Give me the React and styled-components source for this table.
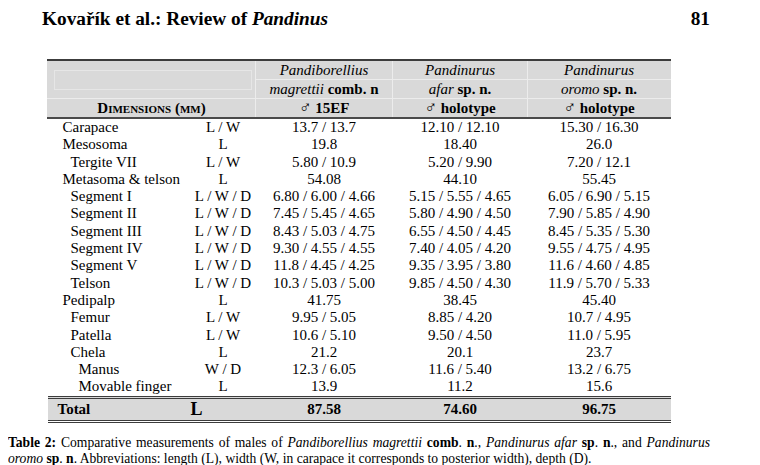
import React from "react";
import styled, { createGlobalStyle } from "styled-components";

const serif = `"Liberation Serif", "Times New Roman", serif`;

const GlobalStyle = createGlobalStyle`
  body {
    margin: 8px;
    background: #ffffff;
    color: #000000;
    font-family: ${serif};
  }
`;

const Page = styled.div`
  width: 744px;
  font-family: ${serif};
`;

const RunningHead = styled.header`
  display: flex;
  justify-content: space-between;
  align-items: baseline;
  padding: 0 42px 0 34px;
  font-size: 19.3px;
  line-height: 22px;
  font-weight: bold;
`;

const Table = styled.table`
  margin: 29px 0 0 39px;
  width: 623px;
  border-collapse: collapse;
  font-family: ${serif};
  font-size: 15px;
  table-layout: fixed;
`;

const HeadCell = styled.th`
  background: #d9d9d9;
  border: 1px solid #ececec;
  font-weight: normal;
  text-align: center;
  vertical-align: bottom;
  height: 18px;
  line-height: 18px;
  padding: 0;
  ${(p) => p.$top && "border-top: 2px solid #3c3c3c;"}
  ${(p) => p.$bottom && "border-bottom: 2px solid #4a4a4a;"}
  ${(p) => p.$first && "border-left-color: #d9d9d9;"}
  ${(p) => p.$last && "border-right-color: #d9d9d9;"}
`;

const BlankBox = styled.div`
  margin: 0 3px 8px 6px;
  height: 18px;
  border: 1px solid #e6e6e6;
`;

const DimLabel = styled.span`
  font-weight: bold;
  font-variant: small-caps;
`;

const Male = styled.span`
  font-size: 17px;
  font-weight: normal;
`;

const Cell = styled.td`
  height: 17.3px;
  line-height: 17.3px;
  white-space: nowrap;
  padding: 0 0 0 ${(p) => (p.$left ? 15 + p.$indent * 8 : 0)}px;
  text-align: ${(p) => (p.$left ? "left" : "center")};
`;

const TotalCell = styled.td`
  background: #d9d9d9;
  border-top: 3px double #3c3c3c;
  border-bottom: 3px double #3c3c3c;
  height: 19px;
  padding: 0;
  font-weight: bold;
  text-align: ${(p) => p.$align || "center"};
  padding-left: ${(p) => p.$pad || 0}px;
`;

const BigL = styled.span`
  font-size: 18px;
`;

const Caption = styled.p`
  margin: 12px 0 0 0;
  width: 702px;
  font-size: 13.6px;
  line-height: 16px;
  text-align: justify;
`;

const rows = [
  ["Carapace", 0, "L / W", "13.7 / 13.7", "12.10 / 12.10", "15.30 / 16.30"],
  ["Mesosoma", 0, "L", "19.8", "18.40", "26.0"],
  ["Tergite VII", 1, "L / W", "5.80 / 10.9", "5.20 / 9.90", "7.20 / 12.1"],
  ["Metasoma & telson", 0, "L", "54.08", "44.10", "55.45"],
  ["Segment I", 1, "L / W / D", "6.80 / 6.00 / 4.66", "5.15 / 5.55 / 4.65", "6.05 / 6.90 / 5.15"],
  ["Segment II", 1, "L / W / D", "7.45 / 5.45 / 4.65", "5.80 / 4.90 / 4.50", "7.90 / 5.85 / 4.90"],
  ["Segment III", 1, "L / W / D", "8.43 / 5.03 / 4.75", "6.55 / 4.50 / 4.45", "8.45 / 5.35 / 5.30"],
  ["Segment IV", 1, "L / W / D", "9.30 / 4.55 / 4.55", "7.40 / 4.05 / 4.20", "9.55 / 4.75 / 4.95"],
  ["Segment V", 1, "L / W / D", "11.8 / 4.45 / 4.25", "9.35 / 3.95 / 3.80", "11.6 / 4.60 / 4.85"],
  ["Telson", 1, "L / W / D", "10.3 / 5.03 / 5.00", "9.85 / 4.50 / 4.30", "11.9 / 5.70 / 5.33"],
  ["Pedipalp", 0, "L", "41.75", "38.45", "45.40"],
  ["Femur", 1, "L / W", "9.95 / 5.05", "8.85 / 4.20", "10.7 / 4.95"],
  ["Patella", 1, "L / W", "10.6 / 5.10", "9.50 / 4.50", "11.0 / 5.95"],
  ["Chela", 1, "L", "21.2", "20.1", "23.7"],
  ["Manus", 2, "W / D", "12.3 / 6.05", "11.6 / 5.40", "13.2 / 6.75"],
  ["Movable finger", 2, "L", "13.9", "11.2", "15.6"],
];

export default function App() {
  return (
    <Page>
      <GlobalStyle />
      <RunningHead>
        <span>
          Kovařík et al.: Review of <i>Pandinus</i>
        </span>
        <span>81</span>
      </RunningHead>

      <Table>
        <colgroup>
          <col style={{ width: 143 }} />
          <col style={{ width: 65 }} />
          <col style={{ width: 137 }} />
          <col style={{ width: 135 }} />
          <col style={{ width: 143 }} />
        </colgroup>
        <thead>
          <tr>
            <HeadCell colSpan={2} rowSpan={2} $top $first>
              <BlankBox />
            </HeadCell>
            <HeadCell $top>
              <i>Pandiborellius</i>
            </HeadCell>
            <HeadCell $top>
              <i>Pandinurus</i>
            </HeadCell>
            <HeadCell $top $last>
              <i>Pandinurus</i>
            </HeadCell>
          </tr>
          <tr>
            <HeadCell>
              <i>magrettii</i> <b>comb. n</b>
            </HeadCell>
            <HeadCell>
              <i>afar</i> <b>sp. n.</b>
            </HeadCell>
            <HeadCell $last>
              <i>oromo</i> <b>sp. n.</b>
            </HeadCell>
          </tr>
          <tr>
            <HeadCell colSpan={2} $bottom $first>
              <DimLabel>Dimensions (mm)</DimLabel>
            </HeadCell>
            <HeadCell $bottom>
              <Male>♂</Male> <b>15EF</b>
            </HeadCell>
            <HeadCell $bottom>
              <Male>♂</Male> <b>holotype</b>
            </HeadCell>
            <HeadCell $bottom $last>
              <Male>♂</Male> <b>holotype</b>
            </HeadCell>
          </tr>
        </thead>
        <tbody>
          {rows.map(([name, indent, dim, a, b, c]) => (
            <tr key={name}>
              <Cell $left $indent={indent}>
                {name}
              </Cell>
              <Cell>{dim}</Cell>
              <Cell>{a}</Cell>
              <Cell>{b}</Cell>
              <Cell>{c}</Cell>
            </tr>
          ))}
          <tr>
            <TotalCell $align="left" $pad={10}>
              Total
            </TotalCell>
            <TotalCell $align="left">
              <BigL>L</BigL>
            </TotalCell>
            <TotalCell>87.58</TotalCell>
            <TotalCell>74.60</TotalCell>
            <TotalCell>96.75</TotalCell>
          </tr>
        </tbody>
      </Table>

      <Caption>
        <b>Table 2:</b> Comparative measurements of males of <i>Pandiborellius magrettii</i>{" "}
        <b>comb</b>. <b>n</b>., <i>Pandinurus afar</i> <b>sp</b>. <b>n</b>., and <i>Pandinurus</i>{" "}
        <i>oromo</i> <b>sp</b>. <b>n</b>. Abbreviations: length (L), width (W, in carapace it
        corresponds to posterior width), depth (D).
      </Caption>
    </Page>
  );
}
